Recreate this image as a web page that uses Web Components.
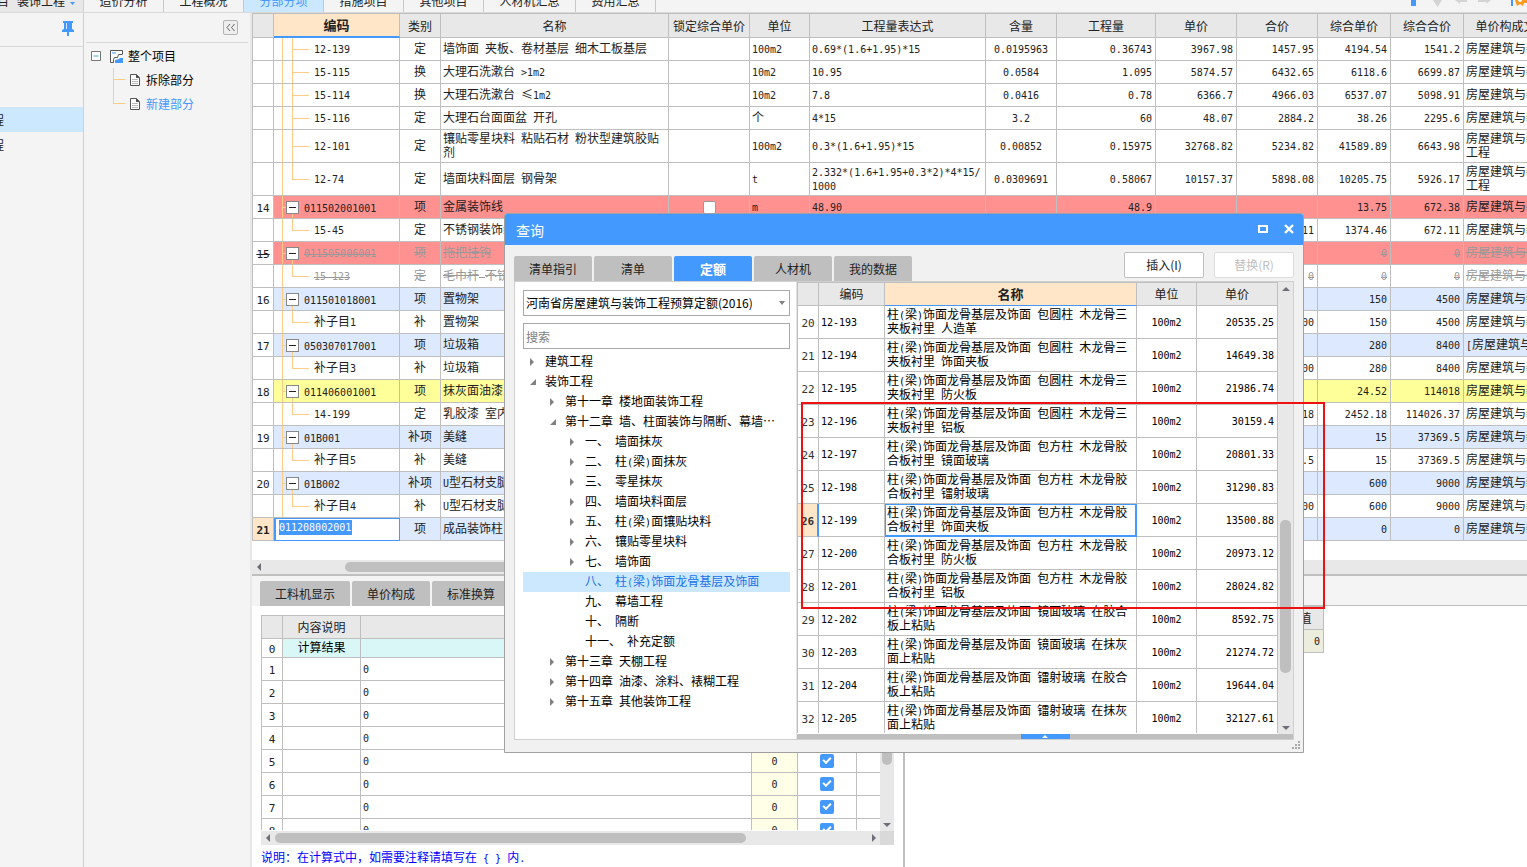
<!DOCTYPE html>
<html lang="zh-CN">
<head>
<meta charset="utf-8">
<title>工程计价</title>
<style>
html, body { margin: 0; height: 100%; overflow: hidden; background: #fff; }
body { font: 12px/14px "Noto Sans CJK SC", sans-serif; color: #222; }
</style>
</head>
<body>
<cost-app></cost-app>
<script>
const BASE = `
  *, *::before, *::after { box-sizing: border-box; }
  button, input, select { font: inherit; color: inherit; margin: 0; padding: 0; border: 0; border-radius: 0; background: none; }
  a { color: inherit; text-decoration: none; }
  .l { font-family: "DejaVu Sans Mono", monospace; font-size: 10px; line-height: 10px; white-space: pre-wrap; }
  ul { list-style: none; margin: 0; padding: 0; }
`;
const GRID = `
  table { border-collapse: separate; border-spacing: 0; table-layout: fixed; border-left: 1px solid #bfbfbf; border-top: 1px solid #bfbfbf; }
  th, td { border-right: 1px solid #bfbfbf; border-bottom: 1px solid #bfbfbf; padding: 0 2px; height: 23px; font-weight: normal; overflow: hidden; white-space: nowrap; text-align: left; vertical-align: middle; }
  tbody td { padding-bottom: 2px; }
  thead th { background: #e8e8e8; text-align: center; padding: 0; }
  thead th.hot { background: #ffe6c8; font-weight: bold; font-size: 13px; border-bottom-color: #4499ff; }
  tbody th { text-align: center; padding: 0; }
  tbody th .l { font-size: 11px; }
  .c { text-align: center; }
  .r { text-align: right; padding-right: 3px; }
  .wrap td, td.wrap { height: 33px; white-space: normal; word-break: break-all; }
`;
// Half-width runs are set in a monospaced face so that they take half a CJK cell each.
const mix = s => String(s).replace(/[\x20-\x7e]+/g, m =>
  '<span class="l">' + m.replace(/&/g, '&amp;').replace(/</g, '&lt;').replace(/>/g, '&gt;') + '</span>');
const cols = list => '<colgroup>' + list.map(w => `<col style="width:${w}px">`).join('') + '</colgroup>';
const sum = list => list.reduce((a, b) => a + b, 1);

function define(name, css, html) {
  customElements.define(name, class extends HTMLElement {
    constructor() {
      super();
      this.attachShadow({ mode: 'open' }).innerHTML =
        `<style>${BASE}${css}</style>` + (typeof html === 'function' ? html(this) : html);
    }
  });
}

/* ---- small parts ---- */
define('scroll-bar', `
  :host { display: flex; background: #e8e8e8; align-items: center; flex: none; }
  :host([dir-v]) { flex-direction: column; width: 14px; }
  :host(:not([dir-v])) { height: 14px; }
  svg { flex: none; width: 14px; height: 14px; fill: #6e6e78; }
  .track { flex: 1; align-self: stretch; display: flex; padding: 2px 0; }
  :host([dir-v]) .track { flex-direction: column; padding: 0 2px; }
  .before { flex: var(--before, 0) 0 0; } .after { flex: var(--after, 1) 0 0; }
  .thumb { flex: var(--size, 1) 0 0; border-radius: 5px; background: #bfbfbf; }
`, el => {
  const v = el.hasAttribute('dir-v');
  const a = v ? 'M3 9h8L7 5z' : 'M9 3v8L5 7z', b = v ? 'M3 6h8L7 10z' : 'M6 3v8l4-4z';
  return `<svg viewBox="0 0 14 14"><path d="${a}"/></svg><div class="track"><div class="before"></div><div class="thumb"></div><div class="after"></div></div>` +
    (el.hasAttribute('no-end') ? '' : `<svg viewBox="0 0 14 14"><path d="${b}"/></svg>`);
});

define('gray-tab', `
  :host { display: block; flex: none; width: 78px; height: 25px; }
  :host([wide]) { width: 90px; }
  button { width: 100%; height: 100%; background: #bfbfbf; border-radius: 2px 2px 0 0; color: #222; }
  :host([on]) button { background: #4499ff; color: #fff; font-weight: bold; font-size: 13px; }
`, `<button type="button"><slot></slot></button>`);

/* ---- top strip ---- */
define('top-strip', `
  :host { display: flex; height: 13px; overflow: hidden; background: #f4f4f4; border-bottom: 1px solid #d9d9d9; }
  .proj { flex: none; width: 84px; background: #e8e8e8; border-right: 1px solid #d0d0d0; display: flex; overflow: hidden; }
  .proj button { margin: -6px 0 0 -3px; height: 14px; line-height: 14px; white-space: nowrap; display: flex; gap: 8px; align-items: center; }
  .proj svg { width: 5px; height: 3px; margin: 5px 0 0 -3px; fill: #4499ff; }
  nav { display: flex; flex: 1; }
  nav a { flex: none; width: 80px; height: 12px; border-right: 1px solid #c8c8c8; text-align: center; overflow: hidden; }
  nav a.w { width: 92px; } nav a.m { width: 80px; }
  nav a span { display: block; margin-top: -6px; line-height: 14px; }
  nav a.on { background: #cce8ff; color: #4499ff; }
  .tools { flex: none; width: 116px; height: 12px; }
`, `<div class="proj"><button type="button"><span>目</span><span>装饰工程</span><svg viewBox="0 0 5 3"><path d="M0 0h5L2.500 3z"/></svg></button></div>
  <nav>${[['造价分析'], ['工程概况'], ['分部分项', 'on'], ['措施项目'], ['其他项目'], ['人材机汇总', 'w'], ['费用汇总', 'm']]
    .map(([t, c]) => `<a href="#" class="${c || ''}"><span>${t}</span></a>`).join('')}</nav>
  <svg class="tools" viewBox="0 0 116 12"><path fill="#4499ff" d="M0 0h5v6H0zM100 0h2v6h-2z"/><path fill="#d4d4d4" d="M22 0h9l-4.500 7zM44 0h3l2 0v4zM47 0h9v2h-7v2zM67 0h9v2h-9zM76 0h4l-5 4z"/><path fill="#ff9a1f" d="M104 0h12v3l-3 0-1 3-3-2-3 2-1-3z"/><circle cx="109" cy="0" r="2" fill="#fff"/></svg>`);

/* ---- left panels ---- */
define('project-list', `
  :host { display: block; background: #f4f4f4; border-right: 1px solid #d0d0d0; }
  header { height: 34px; border-bottom: 1px solid #d9d9d9; display: flex; justify-content: flex-end; padding: 8px 9px 0 0; }
  header button { width: 12px; height: 16px; }
  svg { display: block; }
  ul { padding-top: 60px; }
  li a { display: flex; width: 4px; height: 25px; overflow: hidden; justify-content: flex-end; align-items: center; white-space: nowrap; }
  li.on { background: #cce8ff; }
`, `<header><button type="button" aria-label="固定"><svg width="12" height="16" viewBox="0 0 12 16"><path fill="#4499ff" d="M1 0h10v2h-1v6l2 1v2H7v4H5v-4H0V9l2-1V2H1z"/><path stroke="#cfe4ff" d="M4.500 2v6"/></svg></button></header>
  <ul><li class="on"><a href="#">程</a></li><li><a href="#">程</a></li></ul>`);

define('section-tree', `
  :host { display: block; background: #f4f4f4; border-right: 2px solid #e8e8e8; }
  header { height: 30px; margin: 0 2px; border-bottom: 1px solid #d9d9d9; display: flex; justify-content: flex-end; padding: 7px 10px 0 0; }
  header button { width: 15px; height: 15px; border: 1px solid #b4b4b4; border-radius: 2px; background: #eee; }
  svg { display: block; flex: none; }
  .tree { padding-top: 1px; }
  .row { display: flex; align-items: center; height: 24px; padding-left: 7px; }
  .row a { color: #000; }
  .row .ico { margin: 0 5px 0 9px; }
  .row .line { margin-left: 22px; }
  .row .doc { margin: 0 6px 0 4px; }
  .row.on a { color: #4499ff; }
`, `<header><button type="button" aria-label="收起"><svg width="13" height="13" viewBox="0 0 13 13" fill="none" stroke="#666"><path d="M6 3L3 6.500 6 10M10.500 3l-3 3.500 3 3.500"/></svg></button></header>
  <div class="tree">
    <div class="row"><svg width="10" height="10" viewBox="0 0 10 10"><path d="M.5.5h9v9h-9z" fill="#fff" stroke="#777"/><path stroke="#3ab0d8" d="M2.500 5h5"/></svg>
      <svg class="ico" width="13" height="13" viewBox="0 0 13 13"><path d="M12.500 4V.5H.5v12h3" fill="#fff" stroke="#555"/><path d="M12.500 4.500h-4l-1 3h-3l-1 2v3" fill="none" stroke="#555"/><path fill="#9accff" d="M2 2h4v2H2z"/><path fill="#4499ff" d="M5 13v-3l4-1 1-1h3v5z"/></svg><a href="#">整个项目</a></div>
    ${[['拆除部分', 24], ['新建部分', 12]].map(([t, h], i) => `<div class="row ${i ? 'on' : ''}">
      <svg class="line" width="13" height="24" viewBox="0 0 13 24"><path d="M.5 0v${h}M.5 11.500h12" stroke="#fc8" fill="none"/></svg>
      <svg class="doc" width="10" height="12" viewBox="0 0 10 12"><path d="M.5.5h6l3 3v8h-9z" fill="#fff" stroke="#555"/><path d="M6 0l4 4H6z" fill="#555"/><path stroke="#bbb" d="M2 5.500h6M2 7.500h6M2 9.500h6"/></svg><a href="#">${t}</a></div>`).join('')}
  </div>`);

/* ---- main quantity grid ---- */
const W = [21, 126, 41, 228, 81, 60, 176, 71, 99, 81, 81, 73, 73, 96];
const HEAD = ['', '编码', '类别', '名称', '锁定综合单价', '单位', '工程量表达式', '含量', '工程量', '单价', '合价', '综合单价', '综合合价', '单价构成文件'];
const F = '房屋建筑与装饰工程';
const ROWS = [
  ['mid', '', '12-139', '定', '墙饰面 夹板、卷材基层 细木工板基层', '', '100m2', '0.69*(1.6+1.95)*15', '0.0195963', '0.36743', '3967.98', '1457.95', '4194.54', '1541.2', F],
  ['mid', '', '15-115', '换', '大理石洗漱台 >1m2', '', '10m2', '10.95', '0.0584', '1.095', '5874.57', '6432.65', '6118.6', '6699.87', F],
  ['mid', '', '15-114', '换', '大理石洗漱台 ≤1m2', '', '10m2', '7.8', '0.0416', '0.78', '6366.7', '4966.03', '6537.07', '5098.91', F],
  ['mid', '', '15-116', '定', '大理石台面面盆 开孔', '', '个', '4*15', '3.2', '60', '48.07', '2884.2', '38.26', '2295.6', F],
  ['mid wrap', '', '12-101', '定', '镶贴零星块料 粘贴石材 粉状型建筑胶贴剂', '', '100m2', '0.3*(1.6+1.95)*15', '0.00852', '0.15975', '32768.82', '5234.82', '41589.89', '6643.98', F],
  ['last wrap', '', '12-74', '定', '墙面块料面层 钢骨架', '', 't', '2.332*(1.6+1.95+0.3*2)*4*15/1000', '0.0309691', '0.58067', '10157.37', '5898.08', '10205.75', '5926.17', F],
  ['par red', '14', '011502001001', '项', '金属装饰线', 'x', 'm', '48.90', '', '48.9', '', '', '13.75', '672.38', F],
  ['last', '', '15-45', '定', '不锈钢装饰线', '', '', '', '', '', '', '672.11', '1374.46', '672.11', F],
  ['par red del', '15', '011505006001', '项', '拖把挂钩', '', '', '', '', '', '', '', '0', '0', F],
  ['last del', '', '15-123', '定', '毛巾杆 不锈钢', '', '', '', '', '', '', '0', '0', '0', F],
  ['par blue', '16', '011501018001', '项', '置物架', '', '', '', '', '', '', '', '150', '4500', F],
  ['last', '', '补子目1', '补', '置物架', '', '', '', '', '', '', '4500', '150', '4500', F],
  ['par blue', '17', '050307017001', '项', '垃圾箱', '', '', '', '', '', '', '', '280', '8400', '[' + F],
  ['last', '', '补子目3', '补', '垃圾箱', '', '', '', '', '', '', '8400', '280', '8400', F],
  ['par yellow', '18', '011406001001', '项', '抹灰面油漆', '', '', '', '', '', '', '', '24.52', '114018', F],
  ['last', '', '14-199', '定', '乳胶漆 室内', '', '', '', '', '', '', '2452.18', '2452.18', '114026.37', F],
  ['par blue', '19', '01B001', '补项', '美缝', '', '', '', '', '', '', '', '15', '37369.5', F],
  ['last', '', '补子目5', '补', '美缝', '', '', '', '', '', '', '37369.5', '15', '37369.5', F],
  ['par blue', '20', '01B002', '补项', 'U型石材支腿', '', '', '', '', '', '', '', '600', '9000', F],
  ['last', '', '补子目4', '补', 'U型石材支腿', '', '', '', '', '', '', '9000', '600', '9000', F],
  ['edit blue', '21', '011208002001', '项', '成品装饰柱', '', '', '', '', '', '', '', '0', '0', F],
];
const ALIGN = ['', '', 'c', '', 'c', '', '', 'c', 'r', 'r', 'r', 'r', 'r', ''];
define('quantity-grid', GRID + `
  :host { display: block; overflow: hidden; padding-bottom: 19px; }
  thead th { height: 24px; }
  thead th.hot { border-bottom: 2px solid #4499ff; }
  .red td { background-color: #ff9191; } .blue td { background-color: #dce9ff; } .yellow td { background-color: #ffff99; }
  .del td { color: #999; text-decoration: line-through; }
  .del .l { display: inline-block; text-decoration: line-through; }
  td.code { --o: linear-gradient(#fc8, #fc8); background-repeat: no-repeat; background-clip: padding-box; padding-left: 40px; }
  .mid td.code { background-image: var(--o), var(--o), var(--o); background-position: 8px 0, 18px 0, 18px 50%; background-size: 1px 100%, 1px 100%, 17px 1px; }
  .last td.code { background-image: var(--o), var(--o), var(--o); background-position: 8px 0, 18px 0, 18px 50%; background-size: 1px 100%, 1px 50%, 17px 1px; }
  .par td.code { padding: 0 0 0 12px; background-image: var(--o), var(--o), var(--o); background-position: 8px 0, 8px 50%, 18px 100%; background-size: 1px 100%, 4px 1px, 1px 5px; }
  .node { display: flex; align-items: center; gap: 5px; }
  .node button { width: 13px; height: 13px; flex: none; background: #fff; border: 1px solid #888; display: flex; align-items: center; justify-content: center; }
  .node button::before { content: ""; width: 7px; height: 1px; background: #222; }
  .node span { padding-bottom: 1px; }
  .edit th { background: #ffe6c8; font-weight: bold; }
  .edit td.code { background: #fff; padding: 0 0 5px 3px; border: 1px solid #4499ff; border-left-width: 2px; }
  .edit input { display: block; width: 73px; height: 15px; background: #4499ff; color: #fff; font: 10px/15px "DejaVu Sans Mono", monospace; }
  input[type=checkbox] { appearance: none; display: block; margin: 2px auto 0; width: 13px; height: 13px; border: 1px solid #999; border-radius: 2px; background: #fff; }
`, `<table style="width:${sum(W)}px">${cols(W)}
  <thead><tr>${HEAD.map((h, i) => `<th scope="col"${i === 1 ? ' class="hot"' : ''}>${h}</th>`).join('')}</tr></thead>
  <tbody>${ROWS.map(([cls, ...v]) => `<tr class="${cls}">` + v.map((t, i) => {
    if (i === 0) return `<th scope="row">${mix(t)}</th>`;
    if (i === 1) {
      if (cls.startsWith('edit')) return `<td class="code"><input aria-label="编码" value="${t}"></td>`;
      return `<td class="code">${cls.startsWith('par') ? `<div class="node"><button type="button" aria-label="折叠"></button><span>${mix(t)}</span></div>` : mix(t)}</td>`;
    }
    if (t === 'x') return `<td class="c"><input type="checkbox" aria-label="锁定综合单价"></td>`;
    return `<td class="${ALIGN[i]}">${mix(t)}</td>`;
  }).join('') + '</tr>').join('')}</tbody></table>`);

/* ---- lower panes ---- */
const DW = [21, 78, 391, 46, 59, 60];
define('detail-pane', GRID + `
  :host { display: flex; flex: 1; min-height: 0; }
  .left { flex: 651 1 0; min-width: 0; display: flex; flex-direction: column; }
  .tabs { flex: none; height: 30px; background: #f4f4f4; display: flex; gap: 2px; padding: 5px 0 0 8px; }
  .box { flex: 1; min-height: 0; margin: 9px 9px 0; display: flex; }
  .view { flex: 1; min-width: 0; overflow: hidden; margin-bottom: 1px; }
  .hs { flex: none; margin: 0 9px; display: flex; }
  .hs scroll-bar { flex: 1; }
  .corner { width: 14px; height: 14px; background: #d9d9d9; }
  .note { flex: none; margin: 0; height: 22px; padding: 5px 9px; color: #0000ff; white-space: nowrap; }
  .zero th, .zero td { height: 19px; }
  .zero td { background: #d9f7f7; }
  .zero td + td { border-right-color: #d9f7f7; }
  .y { background: #fffee6; }
  tbody td { color: #222; }
  .zero td { color: #000; text-align: center; }
  td.k { padding: 0; }
  input { appearance: none; display: block; margin: 0 auto; width: 14px; height: 14px; border-radius: 2px; background: #4499ff; position: relative; }
  input::after { content: ""; position: absolute; left: 3px; top: 3px; width: 8px; height: 5px; border: solid #fff; border-width: 0 0 2px 2px; transform: rotate(-45deg); }
  .split { flex: none; width: 2px; background: #bfbfbf; }
  .right { flex: 622 1 0; min-width: 0; background: #fff; overflow: hidden; }
  .bar { height: 30px; background: #f4f4f4; border-bottom: 1px solid #bfbfbf; }
  .right table { margin: 0 0 0 7px; }
  .right td { background: #ededdd; }
`, `<div class="left">
    <div class="tabs"><gray-tab wide>工料机显示</gray-tab><gray-tab>单价构成</gray-tab><gray-tab>标准换算</gray-tab></div>
    <div class="box"><div class="view"><table style="width:${sum(DW)}px">${cols(DW)}
      <thead><tr><th></th><th scope="col">内容说明</th><th></th><th></th><th></th><th></th></tr></thead>
      <tbody><tr class="zero"><th scope="row">${mix('0')}</th><td>计算结果</td><td></td><td></td><td></td><td></td></tr>
      ${[1, 2, 3, 4, 5, 6, 7, 8].map(n => `<tr><th scope="row">${mix(n)}</th><td></td><td>${mix('0')}</td><td class="c y">${mix('0')}</td><td class="k"><input type="checkbox" checked aria-label="计入第${n}行"></td><td></td></tr>`).join('')}</tbody></table></div>
      <scroll-bar dir-v style="--before:0;--size:137;--after:52"></scroll-bar></div>
    <div class="hs"><scroll-bar style="--before:0;--size:472;--after:120"></scroll-bar><div class="corner"></div></div>
    <p class="note">说明：在计算式中，如需要注释请填写在${mix(' { } ')}内${mix('.')}</p>
  </div>
  <div class="split"></div>
  <div class="right"><div class="bar"></div>
    <table style="width:412px">${cols([375, 36])}<thead><tr><th></th><th scope="col">值</th></tr></thead><tbody><tr><td></td><td class="r">${mix('0')}</td></tr></tbody></table>
  </div>`);

/* ---- query dialog ---- */
const TREE = [[0, '建筑工程', 'r'], [0, '装饰工程', 'd'], [1, '第十一章 楼地面装饰工程', 'r'], [1, '第十二章 墙、柱面装饰与隔断、幕墙…', 'd'],
  [2, '一、 墙面抹灰', 'r'], [2, '二、 柱(梁)面抹灰', 'r'], [2, '三、 零星抹灰', 'r'], [2, '四、 墙面块料面层', 'r'], [2, '五、 柱(梁)面镶贴块料', 'r'],
  [2, '六、 镶贴零星块料', 'r'], [2, '七、 墙饰面', 'r'], [2, '八、 柱(梁)饰面龙骨基层及饰面', 'on'], [2, '九、 幕墙工程', ''], [2, '十、 隔断', ''],
  [2, '十一、 补充定额', ''], [1, '第十三章 天棚工程', 'r'], [1, '第十四章 油漆、涂料、裱糊工程', 'r'], [1, '第十五章 其他装饰工程', 'r']];
define('quota-tree', `
  :host { display: block; }
  li { display: flex; align-items: center; height: 20px; padding-left: 6px; color: #000; white-space: nowrap; }
  li.i1 { padding-left: 26px; } li.i2 { padding-left: 46px; }
  li.on { background: #cce8ff; color: #1a73e8; }
  svg { flex: none; width: 8px; height: 8px; margin-right: 8px; fill: #808080; }
  a { padding-bottom: 2px; }
`, `<ul>${TREE.map(([n, t, k]) => `<li class="i${n} ${k === 'on' ? 'on' : ''}"><svg viewBox="0 0 8 8">${k === 'r' ? '<path d="M1 0v8l4-4z"/>' : k === 'd' ? '<path d="M7 1v6H1z"/>' : ''}</svg><a href="#">${mix(t)}</a></li>`).join('')}</ul>`);

const QW = [21, 66, 252, 60, 81];
const P = '柱(梁)饰面龙骨基层及饰面 ';
const Q = [['包圆柱 木龙骨三夹板衬里 人造革', '20535.25'], ['包圆柱 木龙骨三夹板衬里 饰面夹板', '14649.38'], ['包圆柱 木龙骨三夹板衬里 防火板', '21986.74'],
  ['包圆柱 木龙骨三夹板衬里 铝板', '30159.4'], ['包方柱 木龙骨胶合板衬里 镜面玻璃', '20801.33'], ['包方柱 木龙骨胶合板衬里 镭射玻璃', '31290.83'],
  ['包方柱 木龙骨胶合板衬里 饰面夹板', '13500.88'], ['包方柱 木龙骨胶合板衬里 防火板', '20973.12'], ['包方柱 木龙骨胶合板衬里 铝板', '28024.82'],
  ['镜面玻璃 在胶合板上粘贴', '8592.75'], ['镜面玻璃 在抹灰面上粘贴', '21274.72'], ['镭射玻璃 在胶合板上粘贴', '19644.04'], ['镭射玻璃 在抹灰面上粘贴', '32127.61']];
define('quota-grid', GRID + `
  :host { display: block; overflow: hidden; color: #000; }
  thead th { color: #222; }
  tbody th { color: #333; }
  .sel th { background: #ffe6c8; font-weight: bold; border-right: 2px solid #4499ff; }
  .sel .name { border-color: #4499ff; box-shadow: inset 0 0 0 1px #4499ff; }
`, `<table style="width:${sum(QW)}px">${cols(QW)}
  <thead><tr><th></th><th scope="col">编码</th><th scope="col" class="hot">名称</th><th scope="col">单位</th><th scope="col">单价</th></tr></thead>
  <tbody>${Q.map(([t, p], i) => `<tr class="wrap ${i === 6 ? 'sel' : ''}"><th scope="row">${mix(20 + i)}</th><td>${mix('12-' + (193 + i))}</td><td class="name">${mix(P + t)}</td><td class="c">${mix('100m2')}</td><td class="r">${mix(p)}</td></tr>`).join('')}</tbody></table>`);

define('query-dialog', `
  :host { display: flex; flex-direction: column; background: #f1f1f1; border: 1px solid #a0a0a0; border-radius: 3px 3px 0 0; }
  header { flex: none; height: 31px; background: #4499ff; color: #fff; display: flex; align-items: center; padding: 0 8px 0 11px; border-radius: 2px 2px 0 0; }
  h2 { margin: 0; flex: 1; font-size: 14px; line-height: 20px; font-weight: normal; }
  header button { width: 12px; height: 12px; margin-left: 14px; }
  svg { display: block; }
  .tools { flex: none; height: 36px; display: flex; gap: 2px; align-items: flex-end; padding: 0 9px; }
  .gap { flex: 1; }
  .push { width: 80px; height: 26px; margin: 0 0 3px 8px; align-self: flex-end; background: #fff; border: 1px solid #bfbfbf; border-radius: 2px; }
  .push:disabled { color: #bfbfbf; border-color: #ddd; }
  .body { flex: 1; min-height: 0; margin: 0 9px 12px; border: 1px solid #d0d0d0; display: flex; background: #fff; }
  .side { flex: none; width: 282px; padding: 8px 6px 0 8px; border-right: 1px solid #e4e4e4; }
  .pick { position: relative; }
  .side select, .side input { display: block; width: 100%; height: 26px; border: 1px solid #a9a9a9; background: #fff; padding: 0 2px; appearance: none; color: #000; }
  .side input { margin: 7px 0 3px; }
  .side input::placeholder { color: #808080; opacity: 1; }
  .pick svg { position: absolute; right: 5px; top: 11px; }
  .main { flex: 1; min-width: 0; display: flex; flex-direction: column; }
  .rows { flex: 1; min-height: 0; display: flex; }
  .rows quota-grid { flex: 1; min-width: 0; margin-bottom: 1px; }
  .rows scroll-bar { width: 15px; }
  .fold { flex: none; height: 5px; background: #bfbfbf; display: flex; justify-content: center; }
  .fold button { width: 49px; height: 5px; background: #4499ff; display: flex; justify-content: center; align-items: center; }
  .grip { position: absolute; right: 2px; bottom: 2px; fill: #aaa; }
`, `<header><h2>查询</h2>
    <button type="button" aria-label="最大化"><svg width="12" height="12" viewBox="0 0 12 12"><path d="M2 2h8v6H2z" fill="none" stroke="#fff" stroke-width="2"/></svg></button>
    <button type="button" aria-label="关闭"><svg width="12" height="12" viewBox="0 0 12 12"><path d="M2 1l8 8M10 1l-8 8" stroke="#fff" stroke-width="2.400"/></svg></button></header>
  <div class="tools"><gray-tab>清单指引</gray-tab><gray-tab>清单</gray-tab><gray-tab on>定额</gray-tab><gray-tab>人材机</gray-tab><gray-tab>我的数据</gray-tab><div class="gap"></div>
    <button class="push" type="button">插入(I)</button><button class="push" type="button" disabled>替换(R)</button></div>
  <div class="body">
    <div class="side"><div class="pick"><select aria-label="定额库"><option>河南省房屋建筑与装饰工程预算定额(2016)</option></select>
      <svg width="6" height="4" viewBox="0 0 6 4"><path fill="#808080" d="M0 0h6L3 4z"/></svg></div>
      <input type="text" placeholder="搜索" aria-label="搜索"><quota-tree></quota-tree></div>
    <div class="main"><div class="rows"><quota-grid></quota-grid><scroll-bar dir-v style="--before:224;--size:153;--after:47"></scroll-bar></div>
      <div class="fold"><button type="button" aria-label="展开"><svg width="6" height="3" viewBox="0 0 6 3"><path fill="#fff" d="M0 3h6L3 0z"/></svg></button></div></div>
  </div>
  <svg class="grip" width="9" height="9" viewBox="0 0 9 9"><path d="M6 0h2v2H6zM3 3h2v2H3zM6 3h2v2H6zM0 6h2v2H0zM3 6h2v2H3zM6 6h2v2H6z"/></svg>`);

/* ---- page ---- */
define('cost-app', `
  :host { display: grid; position: relative; height: 100vh; overflow: hidden; grid-template: 13px minmax(0, 1fr) / 84px 168px minmax(0, 1fr); }
  top-strip { grid-column: 1 / -1; }
  main { display: flex; flex-direction: column; min-width: 0; min-height: 0; }
  .rule { flex: none; height: 2px; background: #bfbfbf; }
  query-dialog { position: absolute; left: 504px; top: 213px; width: 800px; height: 540px; }
  .mark { position: absolute; left: 801px; top: 402px; width: 524px; height: 207px; border: 2px solid #ee1111; pointer-events: none; }
`, `<top-strip></top-strip><project-list></project-list><section-tree></section-tree>
  <main><quantity-grid></quantity-grid><scroll-bar no-end style="--before:79;--size:855;--after:327"></scroll-bar><div class="rule"></div><detail-pane></detail-pane></main>
  <query-dialog role="dialog" aria-label="查询"></query-dialog><div class="mark"></div>`);
</script>
</body>
</html>
